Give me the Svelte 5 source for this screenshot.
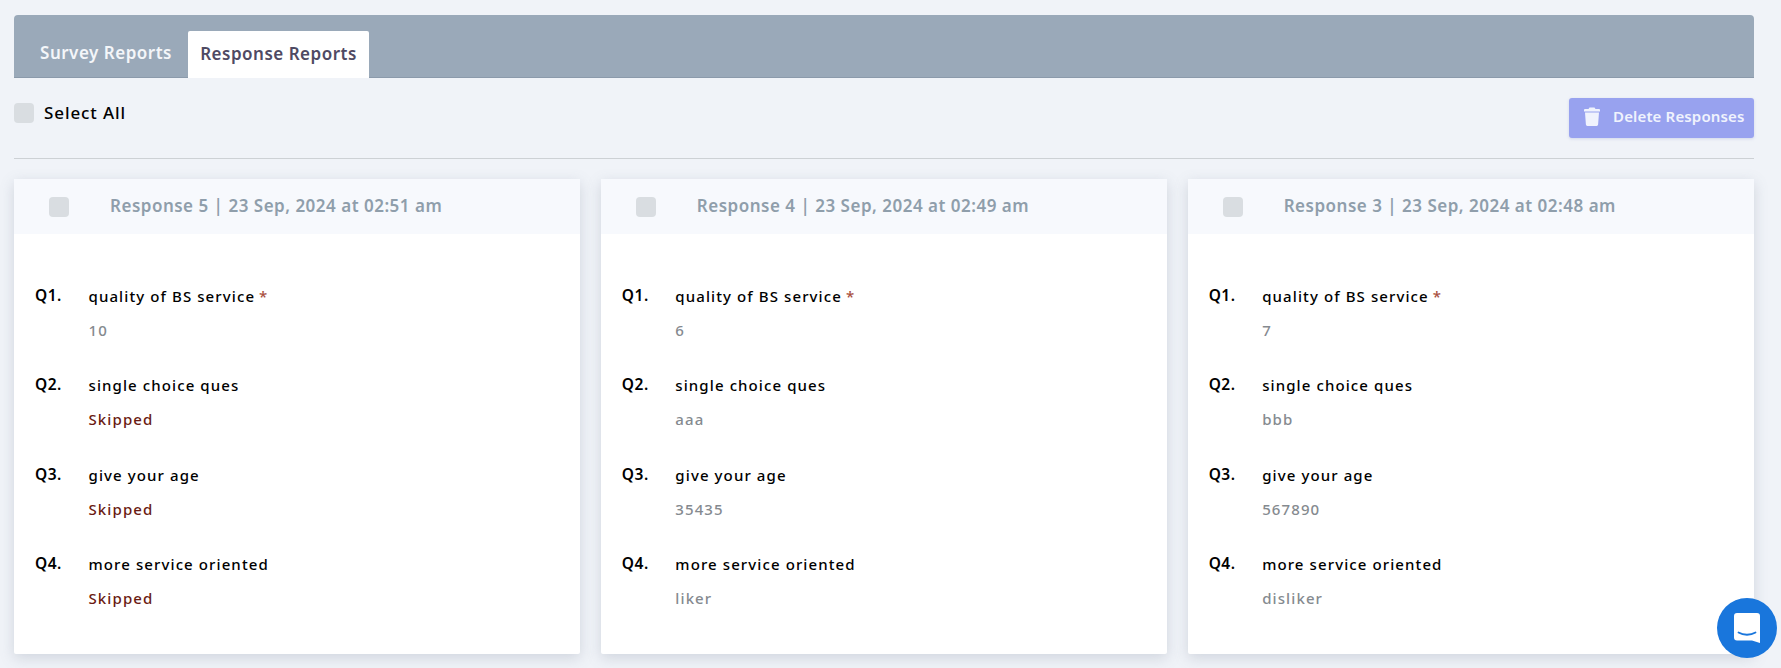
<script>
  const responses = [
    { id: 5, date: "23 Sep, 2024 at 02:51 am", answers: [10, null, null, null] },
    { id: 4, date: "23 Sep, 2024 at 02:49 am", answers: [6, "aaa", 35435, "liker"] },
    { id: 3, date: "23 Sep, 2024 at 02:48 am", answers: [7, "bbb", 567890, "disliker"] }
  ];
  const questions = [
    { text: "quality of BS service", required: true },
    { text: "single choice ques" },
    { text: "give your age" },
    { text: "more service oriented" }
  ];
</script>

<div class="page">
  <div class="tabbar">
    <button class="tab">Survey Reports</button>
    <button class="tab active">Response Reports</button>
  </div>

  <div class="toolbar">
    <label class="select-all"><span class="check"></span><span class="all">Select All</span></label>
    <button class="delete">
      <svg width="16" height="19" viewBox="0 0 16 19" fill="currentColor">
        <path d="M5.5 0.5h5l1 1.5H15a1 1 0 0 1 1 1V4.500H0V3a1 1 0 0 1 1-1h3.500z" />
        <path d="M1 5.500h14l-.9 12a1.500 1.500 0 0 1-1.500 1.400H3.400a1.500 1.500 0 0 1-1.500-1.400z" />
      </svg>
      <span class="del-label">Delete Responses</span>
    </button>
  </div>

  <div class="cards">
    {#each responses as r (r.id)}
      <section class="card">
        <header>
          <span class="check"></span>
          <span class="title">Response {r.id} | {r.date}</span>
        </header>
        <div class="body">
          {#each questions as q, i}
            <div class="qa">
              <span class="num">Q{i + 1}.</span>
              <div>
                <div class="question">{q.text}{#if q.required}<span class="req">*</span>{/if}</div>
                {#if r.answers[i] === null}
                  <div class="answer skipped">Skipped</div>
                {:else}
                  <div class="answer">{r.answers[i]}</div>
                {/if}
              </div>
            </div>
          {/each}
        </div>
      </section>
    {/each}
  </div>

  <button class="chat" aria-label="Chat">
    <svg width="26" height="30" viewBox="0 0 26 30">
      <path fill="#fff" d="M3 0h20a3 3 0 0 1 3 3v27l-8-2.600H3a3 3 0 0 1-3-3V3a3 3 0 0 1 3-3z" />
      <path fill="none" stroke="#1976dc" stroke-width="1.800" stroke-linecap="round" d="M4.500 19.500c5 3 12 3 17 0" />
    </svg>
  </button>
</div>

<style>
  :global(body) {
    background: #f0f3f8;
    font-family: "Noto Sans", sans-serif;
  }

  .page {
    height: 668px;
    padding: 15px 27px 0 14px;
    box-sizing: border-box;
    overflow: hidden;
    position: relative;
  }

  .tabbar {
    display: flex;
    align-items: flex-end;
    gap: 3px;
    height: 63px;
    padding-left: 13px;
    background: #9aa9b9;
    border-radius: 4px 4px 0 0;
    border-bottom: 1px solid #8b9aab;
    box-sizing: border-box;
  }

  .tab {
    height: 47px;
    padding: 0 0 2px;
    width: 158px;
    border: 0;
    background: transparent;
    color: #f4f6f9;
    font: 600 17px "Noto Sans", sans-serif;
    letter-spacing: 0.500px;
    border-radius: 2px 2px 0 0;
  }

  .tab.active {
    width: 181px;
    background: #fff;
    color: #4f4a63;
    margin-bottom: -1px;
  }

  .toolbar {
    display: flex;
    justify-content: space-between;
    height: 80px;
    border-bottom: 1px solid #cdd1d5;
  }

  .select-all {
    display: flex;
    align-items: center;
    gap: 10px;
    height: 20px;
    margin-top: 25px;
    font-size: 17px;
    font-weight: 500;
    letter-spacing: 0.900px;
    color: #000;
  }

  .all {
    margin-bottom: 2px;
  }

  .check {
    display: block;
    flex: none;
    width: 20px;
    height: 20px;
    background: #d9dde1;
    border-radius: 4px;
  }

  .delete {
    display: flex;
    align-items: center;
    gap: 13px;
    height: 40px;
    width: 185px;
    margin-top: 20px;
    padding: 0 0 3px 15px;
    border: 0;
    border-radius: 3px;
    background: #98a2ef;
    color: #f0f3fd;
    font: 600 15px "Noto Sans", sans-serif;
    letter-spacing: 0.150px;
    box-shadow: 0 1px 3px rgba(120, 130, 200, 0.25);
  }

  .del-label {
    margin-bottom: 1px;
  }

  .cards {
    display: grid;
    grid-template-columns: repeat(3, 1fr);
    gap: 20.500px;
    margin-top: 20px;
  }

  .card {
    height: 475px;
    background: #fff;
    border-radius: 2px;
    box-shadow: 0 4px 14px rgba(110, 125, 145, 0.25);
  }

  header {
    display: flex;
    align-items: center;
    height: 55px;
    padding-left: 35px;
    background: #f7f9fd;
  }

  .title {
    margin-left: 41px;
    margin-bottom: 2px;
    color: #8f9eab;
    font-size: 17px;
    font-weight: 600;
    letter-spacing: 0.500px;
  }

  .body {
    padding: 49.500px 21px 0;
  }

  .qa {
    display: flex;
    height: 89.500px;
  }

  .num {
    width: 53.500px;
    flex: none;
    padding-top: 1px;
    color: #000;
    font-size: 15.500px;
    font-weight: 600;
    letter-spacing: 0.500px;
    line-height: 20px;
  }

  .question {
    color: #000;
    font-size: 15px;
    font-weight: 500;
    letter-spacing: 1.100px;
    line-height: 24px;
  }

  .req {
    margin-left: 4px;
    color: #a9503f;
  }

  .answer {
    margin-top: 11px;
    color: #858a8f;
    font-size: 15px;
    font-weight: 500;
    letter-spacing: 1.100px;
    line-height: 22px;
  }

  .answer.skipped {
    color: #6a1a12;
  }

  .chat {
    position: absolute;
    left: 1717px;
    top: 598px;
    display: flex;
    align-items: center;
    justify-content: center;
    width: 60px;
    height: 60px;
    padding: 0;
    border: 0;
    border-radius: 50%;
    background: #1976dc;
  }
</style>
